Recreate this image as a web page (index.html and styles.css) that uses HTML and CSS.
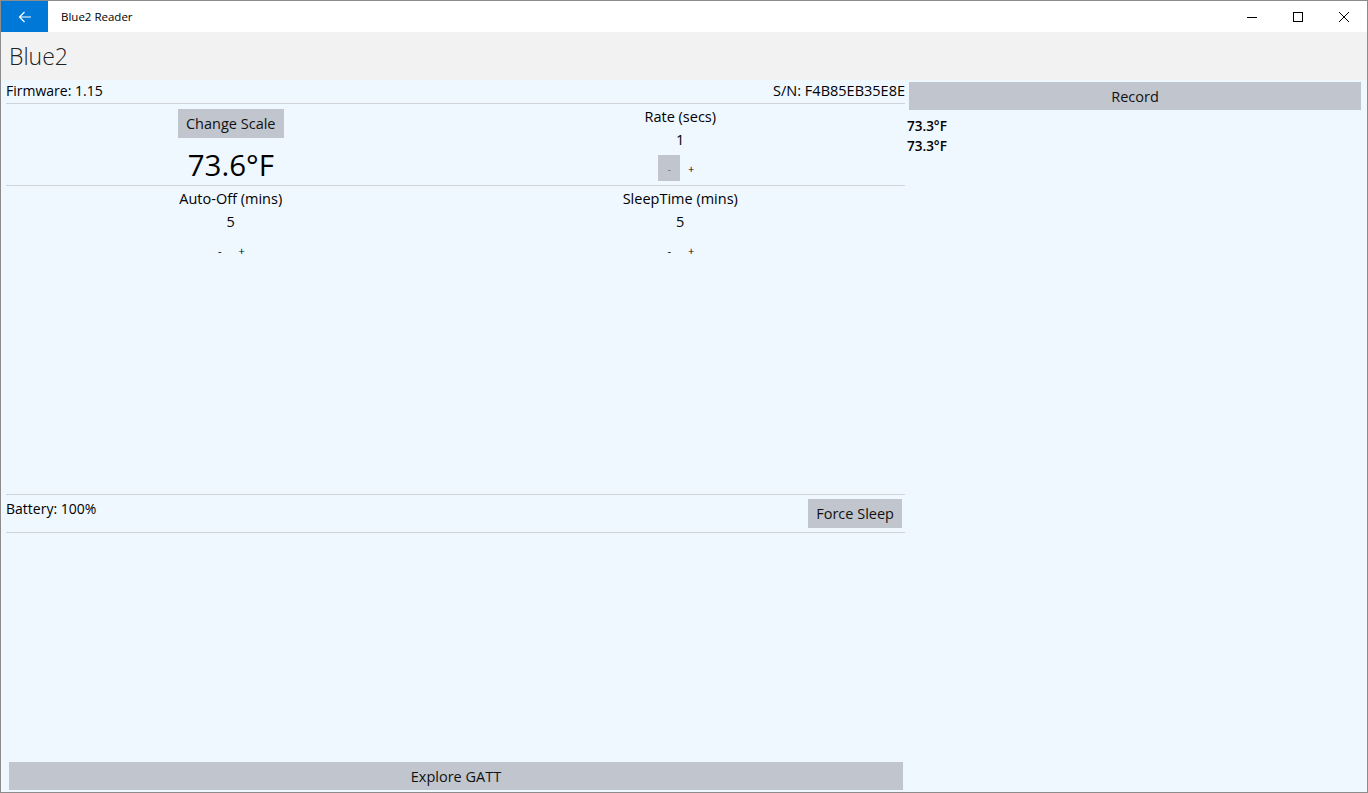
FILE: index.html
```html
<!DOCTYPE html>
<html lang="en">
<head>
    <meta charset="UTF-8">
    <title>Blue2 Reader</title>
    <link rel="stylesheet" href="styles.css">
</head>
<body>
<div class="window">

    <div class="titlebar">
        <div class="back-btn">
            <svg width="16" height="16" viewBox="0 0 16 16">
                <path d="M14 8H2.5M7.5 3L2.5 8l5 5" fill="none" stroke="#fff" stroke-width="1.2"/>
            </svg>
        </div>
        <div class="app-title">Blue2 Reader</div>
        <div class="win-controls">
            <div class="win-btn">
                <svg width="10" height="10" viewBox="0 0 10 10"><path d="M0 5.5h10" stroke="#000" stroke-width="1"/></svg>
            </div>
            <div class="win-btn">
                <svg width="10" height="10" viewBox="0 0 10 10"><rect x="0.5" y="0.5" width="9" height="9" fill="none" stroke="#000" stroke-width="1"/></svg>
            </div>
            <div class="win-btn">
                <svg width="10" height="10" viewBox="0 0 10 10"><path d="M0 0L10 10M10 0L0 10" stroke="#000" stroke-width="1"/></svg>
            </div>
        </div>
    </div>

    <div class="page-header">Blue2</div>

    <div class="content">
        <div class="main">
            <div class="info-row">
                <span>Firmware: 1.15</span>
                <span>S/N: F4B85EB35E8E</span>
            </div>

            <div class="settings">
                <div class="cell">
                    <button class="btn">Change Scale</button>
                    <div class="temp">73.6°F</div>
                </div>
                <div class="cell">
                    <div class="label">Rate (secs)</div>
                    <div class="value">1</div>
                    <div class="steppers">
                        <button class="step pressed">-</button>
                        <button class="step">+</button>
                    </div>
                </div>
                <div class="cell">
                    <div class="label">Auto-Off (mins)</div>
                    <div class="value">5</div>
                    <div class="steppers">
                        <button class="step">-</button>
                        <button class="step">+</button>
                    </div>
                </div>
                <div class="cell">
                    <div class="label">SleepTime (mins)</div>
                    <div class="value">5</div>
                    <div class="steppers">
                        <button class="step">-</button>
                        <button class="step">+</button>
                    </div>
                </div>
            </div>

            <div class="battery-row">
                <span>Battery: 100%</span>
                <button class="btn">Force Sleep</button>
            </div>

            <div class="spacer"></div>

            <button class="btn wide">Explore GATT</button>
        </div>

        <div class="side">
            <button class="btn wide">Record</button>
            <div class="readings">
                <div>73.3°F</div>
                <div>73.3°F</div>
            </div>
        </div>
    </div>

</div>
</body>
</html>
```

FILE: styles.css
```css
html, body {
    margin: 0;
    padding: 0;
    font-family: "Open Sans", "Noto Sans", sans-serif;
    color: #000;
}

.window {
    width: 1368px;
    height: 793px;
    box-sizing: border-box;
    border: 1px solid #8c8c8c;
    display: flex;
    flex-direction: column;
    overflow: hidden;
}

/* title bar */
.titlebar {
    height: 31px;
    background: #fff;
    display: flex;
    align-items: center;
    flex-shrink: 0;
}

.back-btn {
    width: 47px;
    height: 31px;
    background: #0078d7;
    display: flex;
    align-items: center;
    justify-content: center;
}

.app-title {
    font-size: 11.5px;
    margin-left: 13px;
}

.win-controls {
    margin-left: auto;
    display: flex;
    height: 100%;
}

.win-btn {
    width: 46px;
    display: flex;
    align-items: center;
    justify-content: center;
}

.page-header {
    height: 48px;
    background: #f2f2f2;
    font-size: 23px;
    font-weight: 300;
    color: #222;
    padding-left: 8px;
    display: flex;
    align-items: center;
    flex-shrink: 0;
}

.content {
    flex: 1;
    background: #eff7ff;
    display: flex;
    padding: 2px 6px 0 5px;
}

.main {
    width: 899px;
    display: flex;
    flex-direction: column;
}

.info-row {
    display: flex;
    justify-content: space-between;
    font-size: 14px;
    height: 21px;
    line-height: 18px;
    border-bottom: 1px solid #d0d4d8;
}

.info-row span:last-child {
    font-size: 14.5px;
}

.settings {
    display: grid;
    grid-template-columns: 1fr 1fr;
    grid-template-rows: 82px 1fr;
    height: 390px;
    border-bottom: 1px solid #d0d4d8;
}

.settings .cell {
    display: flex;
    flex-direction: column;
    align-items: center;
}

.settings .cell:nth-child(1),
.settings .cell:nth-child(2) {
    border-bottom: 1px solid #d0d4d8;
}

.btn {
    font-family: inherit;
    font-size: 14.5px;
    background: #c1c5cd;
    border: none;
    color: #111;
    padding: 0 8px;
    height: 29px;
}

.settings .btn {
    margin-top: 5px;
}

.temp {
    font-size: 29.5px;
    line-height: 40px;
    margin-top: 7px;
}

.label {
    font-size: 14.5px;
    margin-top: 3px;
    line-height: 20px;
}

.value {
    font-size: 14.5px;
    margin-top: 3px;
    line-height: 20px;
}

.steppers {
    display: flex;
    margin-top: 5px;
}

.step {
    width: 22px;
    height: 26px;
    border: none;
    background: transparent;
    font-family: inherit;
    font-size: 11px;
    padding: 0;
    color: #000;
}

.step.pressed {
    background: #c1c5cd;
    color: #777;
}

.battery-row {
    display: flex;
    justify-content: space-between;
    align-items: flex-start;
    height: 37px;
    font-size: 14px;
    border-bottom: 1px solid #d0d4d8;
}

.battery-row span {
    margin-top: 4px;
}

.battery-row .btn {
    margin-top: 4px;
    margin-right: 3px;
    padding: 0 8px;
}

.spacer {
    flex: 1;
}

.btn.wide {
    width: 100%;
    height: 28px;
}

.main .btn.wide {
    margin: 0 2px 2px 3px;
    width: auto;
}

.side {
    flex: 1;
    margin-left: 4px;
    display: flex;
    flex-direction: column;
}

.readings {
    margin-top: 6px;
    margin-left: -2px;
    font-size: 13.5px;
    font-weight: 600;
    line-height: 20px;
}
```
